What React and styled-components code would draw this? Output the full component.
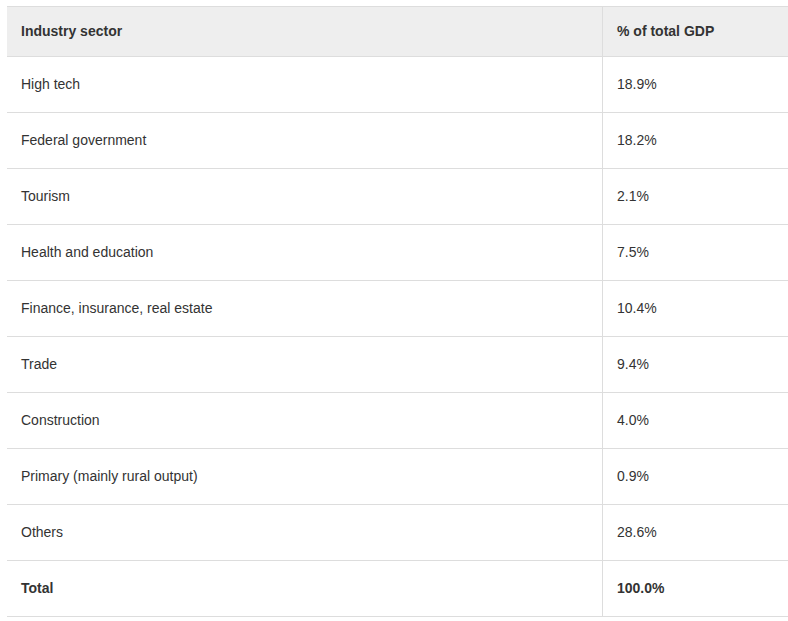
import React from "react"
import styled, { createGlobalStyle } from "styled-components"

const GlobalStyle = createGlobalStyle`
	body {
		margin: 0;
		background: #fff;
		font-family: "Liberation Sans", Arial, sans-serif;
	}
`

const Wrapper = styled.div`
	padding: 6px 0 0 7px;
`

const Table = styled.table`
	width: 781px;
	border-collapse: collapse;
	border-top: 1px solid #dddddd;
	font-size: 14px;
	color: #333333;
	table-layout: fixed;
`

const Row = styled.tr`
	border-bottom: 1px solid #dddddd;
	height: ${props => (props.$head ? "50px" : "56px")};
	background: ${props => (props.$head ? "#eeeeee" : "#ffffff")};
`

const Cell = styled.td`
	padding: 0 14px 2px;
	vertical-align: middle;
	font-weight: ${props => (props.$bold ? "bold" : "normal")};
	text-align: left;

	& + & {
		border-left: 1px solid #dddddd;
	}

	&:first-child {
		width: 567px;
	}
`

const HeadCell = styled(Cell).attrs({ as: "th" })`
	font-weight: bold;
`

const rows = [
	["High tech", "18.9%"],
	["Federal government", "18.2%"],
	["Tourism", "2.1%"],
	["Health and education", "7.5%"],
	["Finance, insurance, real estate", "10.4%"],
	["Trade", "9.4%"],
	["Construction", "4.0%"],
	["Primary (mainly rural output)", "0.9%"],
	["Others", "28.6%"],
]

const App = () => (
	<>
		<GlobalStyle />
		<Wrapper>
			<Table>
				<thead>
					<Row $head>
						<HeadCell>Industry sector</HeadCell>
						<HeadCell>% of total GDP</HeadCell>
					</Row>
				</thead>
				<tbody>
					{rows.map(([sector, share]) => (
						<Row key={sector}>
							<Cell>{sector}</Cell>
							<Cell>{share}</Cell>
						</Row>
					))}
					<Row>
						<Cell $bold>Total</Cell>
						<Cell $bold>100.0%</Cell>
					</Row>
				</tbody>
			</Table>
		</Wrapper>
	</>
)

export default App
